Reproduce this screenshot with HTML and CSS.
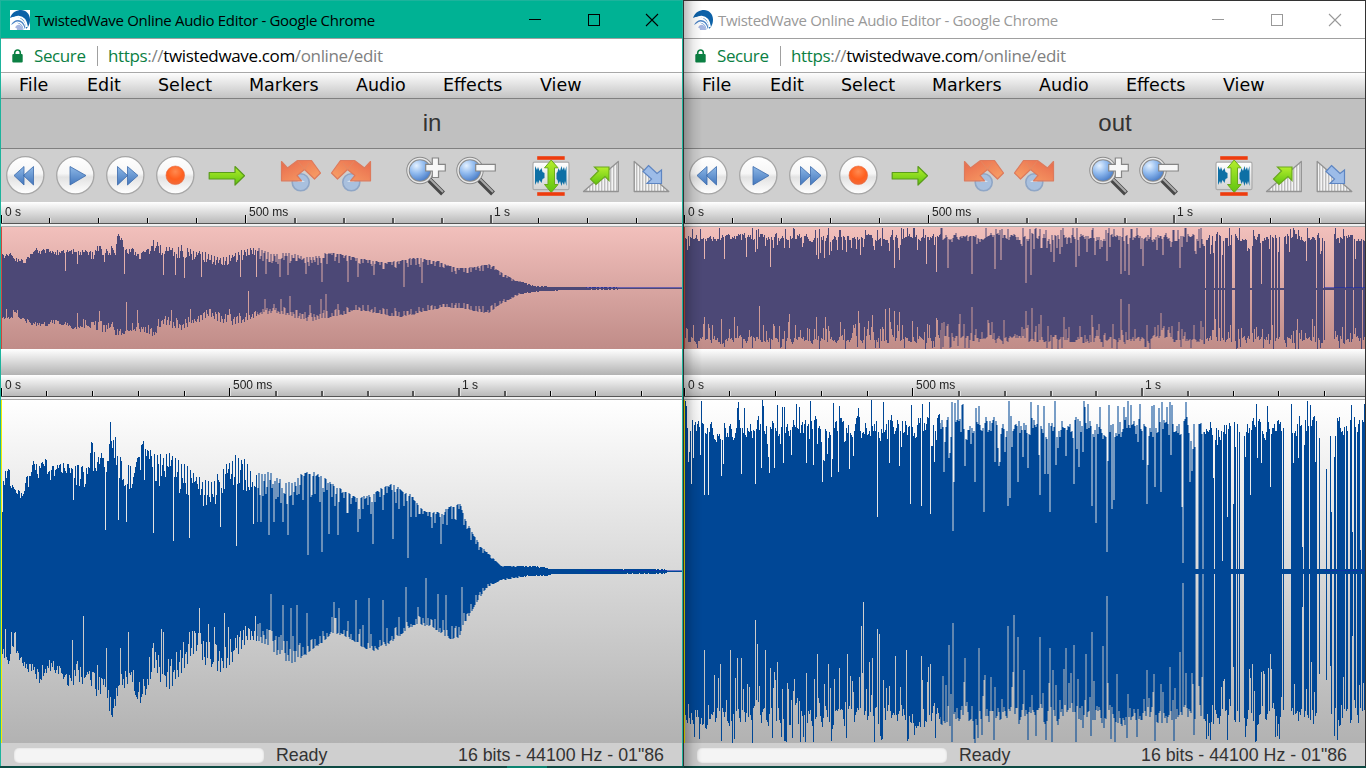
FILE: index.html
```html
<!DOCTYPE html>
<html lang="en">
<head>
<meta charset="utf-8">
<title>TwistedWave Online Audio Editor</title>
<link rel="stylesheet" href="styles.css">
</head>
<body>
<svg class="defs" width="0" height="0" aria-hidden="true">
  <defs>
    <linearGradient id="gBtn" x1="0" y1="0" x2="0" y2="1"><stop offset="0" stop-color="#fff"/><stop offset=".45" stop-color="#f6f6f6"/><stop offset=".55" stop-color="#e2e2e2"/><stop offset="1" stop-color="#fff"/></linearGradient>
    <linearGradient id="gBlue" x1="0" y1="0" x2="0" y2="1"><stop offset="0" stop-color="#8db7e6"/><stop offset="1" stop-color="#4377bd"/></linearGradient>
    <radialGradient id="gRec" cx=".5" cy=".3" r=".7"><stop offset="0" stop-color="#ff8a50"/><stop offset=".6" stop-color="#ff5f1e"/><stop offset="1" stop-color="#f06a3a"/></radialGradient>
    <linearGradient id="gGreen" x1="0" y1="0" x2="0" y2="1"><stop offset="0" stop-color="#b4ee2c"/><stop offset="1" stop-color="#5fc410"/></linearGradient>
    <linearGradient id="gOr" x1="0" y1="0" x2="1" y2="1"><stop offset="0" stop-color="#e8694c"/><stop offset="1" stop-color="#f9a468"/></linearGradient>
    <radialGradient id="gLens" cx=".35" cy=".3" r=".75"><stop offset="0" stop-color="#e4f1ff"/><stop offset=".45" stop-color="#8fb9ee"/><stop offset="1" stop-color="#3c71c0"/></radialGradient>
    <linearGradient id="gPanel" x1="0" y1="0" x2="0" y2="1"><stop offset="0" stop-color="#fff"/><stop offset="1" stop-color="#d2d2d2"/></linearGradient>
    <pattern id="pBars" width="3" height="40" patternUnits="userSpaceOnUse"><rect width="3" height="40" fill="#f4f4f4"/><rect width="1.4" height="40" fill="#bdbdbd"/></pattern>
  </defs>
  <symbol id="logo" viewBox="0 0 20 20">
    <path d="M0 8C2 2 7 0 11 0c5 0 9 4 9 9.500 0 5-2 8-4 9.500 1-8-8-15-16-11z" fill="#0d62a8"/>
    <path d="M1.500 13C2 5 15 3 17 17" fill="none" stroke="#fff" stroke-width="2"/>
    <path d="M1 15C5 7 14 9 15.500 18l-2.500 1.500C12 13 6 11 1 15z" fill="#4f86c6"/>
    <path d="M3.500 14.500C7 9.500 13 13 14 19" fill="none" stroke="#fff" stroke-width="1.200"/>
    <path d="M5 18C7 12 13 15 13 20H7c0-2-1-2.500-2-2z" fill="#a4b5e0"/>
  </symbol>
  <symbol id="lock" viewBox="0 0 11 14"><path d="M2.700 6V3.800a2.800 2.800 0 0 1 5.600 0V6" fill="none" stroke="#0b8043" stroke-width="1.600"/><rect x=".3" y="5" width="10.400" height="8.500" rx="1" fill="#0b8043"/></symbol>
  <symbol id="rew" viewBox="0 0 40 40"><circle cx="20.300" cy="20.300" r="18.600" fill="url(#gBtn)" stroke="#a6a6a6" stroke-width="1.300"/><path d="M9 20.500L19 11.500V30zM18.500 20.500L28.500 11.500V30z" fill="url(#gBlue)" stroke="#3b69ab" stroke-width=".8"/></symbol>
  <symbol id="play" viewBox="0 0 40 40"><circle cx="20.300" cy="20.300" r="18.600" fill="url(#gBtn)" stroke="#a6a6a6" stroke-width="1.300"/><path d="M15 11.500L31 20.500 15 30z" fill="url(#gBlue)" stroke="#3b69ab" stroke-width=".8"/></symbol>
  <symbol id="ff" viewBox="0 0 40 40"><circle cx="20.300" cy="20.300" r="18.600" fill="url(#gBtn)" stroke="#a6a6a6" stroke-width="1.300"/><path d="M12.500 11.500L22.500 20.500 12.500 30zM22.500 11.500L33 20.500 22.500 30z" fill="url(#gBlue)" stroke="#3b69ab" stroke-width=".8"/></symbol>
  <symbol id="rec" viewBox="0 0 40 40"><circle cx="20.300" cy="20.300" r="18.600" fill="url(#gBtn)" stroke="#a6a6a6" stroke-width="1.300"/><circle cx="20.300" cy="20.300" r="9.300" fill="url(#gRec)" stroke="#e86a40" stroke-width=".6"/></symbol>
  <symbol id="arrow" viewBox="0 0 40 40"><path d="M4.200 17.500H30V11.500L39.500 20.700 30 30V24H4.200z" fill="url(#gGreen)" stroke="#5a9c1c" stroke-width="1.200" stroke-linejoin="round"/></symbol>
  <symbol id="undo" viewBox="0 0 42 42"><circle cx="20.700" cy="27.300" r="8.500" fill="#a9c0de" stroke="#8fa6c6" stroke-width="1.600"/><path d="M17 27a4.500 3 0 0 1 8 0" fill="#d6e2f0"/><path d="M17.500 5.500H31.500L40.500 18 34.500 24 24.500 14.500 17 20.500 21.500 25.800H1.500V6.500L7.500 13z" fill="url(#gOr)" stroke="#dd7a5c" stroke-width="1.200" stroke-linejoin="round"/><path d="M17.500 5.500L24.500 14.500 29 8" fill="none" stroke="#e08a65" stroke-width=".8"/></symbol>
  <symbol id="lens" viewBox="0 0 42 42"><path d="M24 24.500L38 38.500" stroke="#484848" stroke-width="5.500"/><path d="M25 24L38 37" stroke="#aaa" stroke-width="2"/><circle cx="15" cy="15.500" r="12" fill="url(#gLens)" stroke="#8b8b8b" stroke-width="3.400"/><circle cx="15" cy="15.500" r="12" fill="none" stroke="#e8e8e8" stroke-width="1.500"/></symbol>
  <symbol id="zin" viewBox="0 0 42 42"><use href="#lens"/><path d="M27.300 3H33.500V9.300H40.300V16H33.500V22.500H27.300V16H20.700V9.300H27.300z" fill="#f7f7f7" stroke="#858585" stroke-width="1.200"/></symbol>
  <symbol id="zout" viewBox="0 0 42 42"><use href="#lens"/><path d="M20.700 9.300H40.300V16H20.700z" fill="#f7f7f7" stroke="#858585" stroke-width="1.200"/></symbol>
  <symbol id="fit" viewBox="0 0 42 42"><rect x="3" y="7.200" width="36" height="27.500" rx="1.500" fill="url(#gPanel)" stroke="#aaa" stroke-width="1.200"/><path d="M5 11l2 4 1-3 1.500 4 2-3 1 4 2 1v5l-2 1-1 4-2-3-1.500 4-1-3-2 4zM26.500 18l1-1 1-4 1.500 3 1.500-5 1 4 1.500-3 1 4 1.500-5v20l-1.500-5-1 4-1.500-3-1 4-1.500-5-1.500 3-1-4-1-1z" fill="#0e70a5"/><path d="M21.200 5L28 12.800H24.500V29.500H28L21.200 37.500 14.500 29.500H18V12.800H14.500z" fill="url(#gGreen)" stroke="#6aa81e" stroke-width="1"/><rect x="7.200" y="1.200" width="27.500" height="3.600" fill="#ee3c0e"/><rect x="7.200" y="37.200" width="27.500" height="3.600" fill="#ee3c0e"/></symbol>
  <symbol id="fadein" viewBox="0 0 42 42"><path d="M3.500 36.500L38.300 6.500V36.500z" fill="url(#pBars)" stroke="#929292" stroke-width="1.300" stroke-linejoin="round"/><path d="M14.500 12H29V25.500L25 21.500 16 29.500 10.500 24 18.500 16z" fill="url(#gGreen)" stroke="#6aa81e" stroke-width="1.200"/></symbol>
  <symbol id="fadeout" viewBox="0 0 42 42"><path d="M4.200 6.500V36.500H38.800z" fill="url(#pBars)" stroke="#929292" stroke-width="1.300" stroke-linejoin="round"/><path d="M18.500 10.500L27 18.500 31.500 15V28.500H17L21.500 24 13 16.500z" fill="#9dbce8" stroke="#5d85c2" stroke-width="1.200"/></symbol>
  <symbol id="min" viewBox="0 0 14 14"><path d="M1 6.500H13" stroke="currentColor"/></symbol>
  <symbol id="max" viewBox="0 0 14 14"><rect x="1.500" y="1.500" width="11" height="11" fill="none" stroke="currentColor"/></symbol>
  <symbol id="close" viewBox="0 0 14 14"><path d="M1 1L13 13M13 1L1 13" fill="none" stroke="currentColor" stroke-width="1.100"/></symbol>
</svg>

<main class="desktop">
  <section class="window active" data-sound="in">
    <header class="titlebar">
      <span class="logo"><svg><use href="#logo"/></svg></span>
      <h1 class="title">TwistedWave Online Audio Editor - Google Chrome</h1>
      <nav class="controls"><svg><use href="#min"/></svg><svg><use href="#max"/></svg><svg><use href="#close"/></svg></nav>
    </header>
    <div class="urlbar">
      <svg class="lock"><use href="#lock"/></svg><span class="secure">Secure</span><i class="divider"></i>
      <span class="url"><span class="scheme">https</span>://<b>twistedwave.com</b>/online/edit</span>
    </div>
    <nav class="menu"><span>File</span><span>Edit</span><span>Select</span><span>Markers</span><span>Audio</span><span>Effects</span><span>View</span></nav>
    <div class="filename">in</div>
    <div class="toolbar">
      <svg><use href="#rew"/></svg><svg><use href="#play"/></svg><svg><use href="#ff"/></svg><svg><use href="#rec"/></svg><svg><use href="#arrow"/></svg>
      <svg class="big group"><use href="#undo"/></svg><svg class="big flip"><use href="#undo"/></svg>
      <svg class="big group"><use href="#zin"/></svg><svg class="big"><use href="#zout"/></svg>
      <svg class="big group"><use href="#fit"/></svg><svg class="big"><use href="#fadein"/></svg><svg class="big"><use href="#fadeout"/></svg>
    </div>
    <div class="ruler ruler-small"><canvas width="681" height="25" data-pitch="48.9"></canvas><span>0 s</span><span>500 ms</span><span>1 s</span></div>
    <canvas class="overview" width="681" height="122"></canvas>
    <div class="scrollbar"></div>
    <div class="ruler ruler-main"><canvas width="681" height="25" data-pitch="45.75"></canvas><span>0 s</span><span>500 ms</span><span>1 s</span></div>
    <canvas class="wave" width="681" height="343"></canvas>
    <footer class="status"><i class="progress"></i><span>Ready</span><span class="format">16 bits - 44100 Hz - 01"86</span></footer>
    <div class="edge"></div>
  </section>

  <section class="window inactive" data-sound="out">
    <header class="titlebar">
      <span class="logo"><svg><use href="#logo"/></svg></span>
      <h1 class="title">TwistedWave Online Audio Editor - Google Chrome</h1>
      <nav class="controls"><svg><use href="#min"/></svg><svg><use href="#max"/></svg><svg><use href="#close"/></svg></nav>
    </header>
    <div class="urlbar">
      <svg class="lock"><use href="#lock"/></svg><span class="secure">Secure</span><i class="divider"></i>
      <span class="url"><span class="scheme">https</span>://<b>twistedwave.com</b>/online/edit</span>
    </div>
    <nav class="menu"><span>File</span><span>Edit</span><span>Select</span><span>Markers</span><span>Audio</span><span>Effects</span><span>View</span></nav>
    <div class="filename">out</div>
    <div class="toolbar">
      <svg><use href="#rew"/></svg><svg><use href="#play"/></svg><svg><use href="#ff"/></svg><svg><use href="#rec"/></svg><svg><use href="#arrow"/></svg>
      <svg class="big group"><use href="#undo"/></svg><svg class="big flip"><use href="#undo"/></svg>
      <svg class="big group"><use href="#zin"/></svg><svg class="big"><use href="#zout"/></svg>
      <svg class="big group"><use href="#fit"/></svg><svg class="big"><use href="#fadein"/></svg><svg class="big"><use href="#fadeout"/></svg>
    </div>
    <div class="ruler ruler-small"><canvas width="681" height="25" data-pitch="48.9"></canvas><span>0 s</span><span>500 ms</span><span>1 s</span></div>
    <canvas class="overview" width="681" height="122"></canvas>
    <div class="scrollbar"></div>
    <div class="ruler ruler-main"><canvas width="681" height="25" data-pitch="45.75"></canvas><span>0 s</span><span>500 ms</span><span>1 s</span></div>
    <canvas class="wave" width="681" height="343"></canvas>
    <footer class="status"><i class="progress"></i><span>Ready</span><span class="format">16 bits - 44100 Hz - 01"86</span></footer>
    <div class="edge"></div>
  </section>
</main>
<script src="waves.js"></script>
</body>
</html>
```

FILE: styles.css
```css
* { box-sizing: border-box; }
body { margin: 0; overflow: hidden; font-family: "Liberation Sans", Arial, sans-serif; }
.defs { position: absolute; }
.desktop { display: flex; width: 1366px; height: 768px; }
svg, canvas { display: block; }

.window { position: relative; display: flex; flex-direction: column; width: 683px; height: 768px; border: 1px solid #1db39c; border-bottom: 0; background: #cfcfcf; }
.inactive { border-color: #333; }
.inactive::after { content: ""; position: absolute; left: 0; top: 0; bottom: 0; width: 18px; background: linear-gradient(90deg, rgba(0,0,0,.26), rgba(0,0,0,.08) 50%, transparent); }

.titlebar { display: flex; align-items: center; height: 38px; padding: 0 23px 0 9px; background: #00b294; border-bottom: 1px solid #a0a0a0; color: #000; }
.inactive .titlebar { background: #fff; color: #999; }
.logo { width: 20px; height: 20px; background: #fff; }
.logo svg { width: 20px; height: 20px; }
.title { margin: 0 0 0 5px; font: 400 15px "Open Sans", "Noto Sans", sans-serif; letter-spacing: -.3px; white-space: nowrap; }
.controls { display: flex; gap: 44.500px; margin-left: auto; }
.controls svg { width: 14px; height: 14px; }

.urlbar { display: flex; align-items: center; height: 34px; padding-left: 11px; background: #fff; border-bottom: 1px solid #a8a8a8; font: 17px "Open Sans", "Noto Sans", sans-serif; white-space: nowrap; color: #808080; }
.lock { width: 11px; height: 14px; margin-top: 1px; }
.secure { width: 63px; margin-left: 11px; color: #0b8043; letter-spacing: -.4px; }
.divider { width: 1px; height: 20px; background: #a0a0a0; margin-right: 10px; }
.url { letter-spacing: -.35px; }
.url b { font-weight: 400; color: #000; }
.scheme { color: #0b8043; }

.menu { display: grid; grid-template-columns: 68px 71px 91px 107px 87px 97px auto; height: 26px; padding-left: 18px; border-bottom: 1px solid #808080; background: linear-gradient(#fdfdfd, #c3c3c3); font: 17.500px/24px "DejaVu Sans", sans-serif; color: #000; }
.filename { height: 50px; padding-left: 181px; border-bottom: 1px solid #808080; background: #c0c0c0; text-align: center; font-size: 24px; line-height: 48px; color: #333; }

.toolbar { display: flex; gap: 10px; height: 53px; padding: 6px 0 0 4px; background: #cfcfcf; }
.toolbar svg { width: 40px; height: 40px; flex: none; }
.toolbar .big { width: 42px; height: 42px; margin-right: -2px; }
.toolbar .group { margin-left: 25px; }
.flip { transform: scaleX(-1); }

.ruler { position: relative; display: grid; height: 25px; padding: 3px 0 0 4px; font-size: 12px; line-height: 15px; color: #222; background: linear-gradient(#fff, #b9b9b9 21px); }
.ruler canvas { position: absolute; left: 0; top: 0; }
.ruler span { position: relative; }
.ruler-small { grid-template-columns: 244px 245px 1fr; }
.ruler-main { grid-template-columns: 228px 229px 1fr; }
.overview { height: 122px; background: linear-gradient(#f2c0bc, #c08c88); }
.scrollbar { height: 26px; background: linear-gradient(#fff, #b2b2b2); }
.wave { height: 343px; background: linear-gradient(#fff, #b2b2b2); }

.status { display: flex; align-items: center; height: 23px; padding: 0 18px 0 13px; background: #cfcfcf; font-size: 17.800px; color: #333; }
.progress { width: 250px; height: 15px; margin: 2px 12px 0 0; border-radius: 5px; background: #f4f4f4; box-shadow: inset 0 0 2px #ccc; }
.status span { margin-top: 1px; }
.format { margin-left: auto; }
.edge { height: 2px; margin: 0 -1px; background: #0d4a43; }
.active .edge { background: linear-gradient(90deg, #0d4a43 507px, #0b8471 507px 547px, #0d4a43 547px); }
```

FILE: waves.js
```js
const SOFT_START = 256, SOFT_END = 520;

function random(seed) {
  let s = seed;
  return () => {
    s = (s * 1664525 + 1013904223) % 4294967296;
    return s / 4294967296;
  };
}

function envelope(points, x) {
  for (let i = 2; i < points.length; i += 2) {
    if (x <= points[i]) {
      const t = (x - points[i - 2]) / (points[i] - points[i - 2]);
      return points[i - 1] + t * (points[i + 1] - points[i - 1]);
    }
  }
  return points[points.length - 1];
}

const IN_TOP = [0,96,3,98,5,104,8,102,12,88,18,84,22,78,24,98,28,96,33,115,36,104,40,112,44,115,48,104,52,108,60,108,67,112,72,106,78,112,82,104,86,108,87,126,88,112,90,138,92,126,95,118,100,120,104,128,106,114,108,145,110,156,112,148,115,128,120,115,125,112,130,108,135,112,138,116,140,128,142,144,143,122,146,134,150,118,155,118,163,118,168,122,173,118,180,108,190,106,195,98,200,92,210,90,218,100,225,110,231,115,236,118,242,115,250,102,256,98,265,101,275,98,285,89,292,90,300,98,310,101,320,96,330,90,341,82,350,77,360,74,370,78,383,86,393,88,403,80,410,77,417,68,425,60,435,60,442,60,450,67,460,68,463,56,470,42,475,34,480,25,490,16,500,6,540,5,548,3,640,2.5,664,2,666,1,681,1];
const IN_BOTTOM = [0,80,5,95,10,88,13,70,15,84,20,92,25,100,32,106,38,112,45,102,52,100,62,108,69,119,75,108,80,112,90,118,95,125,105,120,108,145,112,152,114,138,120,118,125,125,135,127,140,133,143,141,146,118,152,98,160,112,167,119,172,115,178,105,185,95,190,84,195,80,200,90,208,98,217,103,225,98,235,85,245,72,256,71,265,73,275,83,285,90,293,92,300,87,310,80,320,74,330,62,341,64,355,72,365,78,373,81,385,75,395,67,405,60,415,53,430,55,440,62,450,68,458,68,463,52,470,42,475,32,485,17,500,9,512,7,525,5,548,4,551,3,640,2.5,664,2,666,1,681,1];

const DIPS = {
  inWave: {
    top: [1,60,72,72,104,42,117,52,125,50,152,39,172,31,188,34,219,45,235,26,252,48,256,50,260,50,268,37,273,50,282,50,287,37,307,17,321,20,328,38,337,37,357,40,372,28,392,33,407,14,440,28],
    bottom: [4,57,10,60,14,60,71,68,82,44,105,76,119,76,127,60,160,57,162,60,188,60,198,36,207,52,213,55,223,41,227,55,234,66,254,44,257,52,270,22,282,33,290,36,296,33,306,41,333,30,338,36,355,28,368,26,382,28,405,15,417,35,425,6,437,22,445,23,461,15]
  },
  inOverview: {
    top: [64,18,76,25,103,27,123,15,162,14,174,14,183,11,200,12,239,12,255,12,265,15,279,12,287,14,305,15,321,7,347,7,357,12,373,14,403,2,421,6],
    bottom: [5,20,12,21,16,21,76,24,98,22,125,13,136,21,170,21,189,20,228,20,247,2,264,10,273,15,280,10,289,7,309,16,320,10,325,5,337,15]
  },
  outWave: {
    top: [7,88,20,77,24,77,37,96,57,98,71,88,138,90,193,55,226,68,237,66,246,58,269,41,270,90,291,90,300,60,324,66,326,74,334,90,344,104,356,77,366,60,390,88,408,66,412,49,423,20,428,63,430,72,463,68,471,85,477,80,498,65,499,9,538,11,543,55,549,68,566,77,586,85,618,25,638,41,647,60,668,40,676,22],
    bottom: [20,78,36,92,46,78,53,86,57,86,71,48,73,72,81,78,93,90,133,82,144,92,163,82,177,54,179,30,185,90,188,86,193,57,195,62,211,84,222,78,237,84,246,92,265,73,269,51,281,86,295,76,324,54,330,43,334,65,356,65,366,76,369,98,382,76,390,73,402,82,408,60,419,74,423,24,433,102,463,98,470,102,486,95,496,80,499,11,549,95,566,106,577,100,586,82,618,35,627,90,638,18,652,80,668,64]
  },
  outOverview: {
    top: [20,30,40,30,62,32,86,22,134,30,140,31,176,34,210,21,215,29,242,25,252,17,264,21,288,15,311,20,317,29,342,6,347,14,370,27,392,22,423,28,437,15,441,18,445,14,459,23,496,21,540,28,577,5,590,24,622,28,671,30],
    bottom: [20,28,37,30,50,28,75,17,105,25,132,28,141,28,174,22,188,26,201,20,205,19,210,22,215,23,252,29,276,25,288,18,320,31,342,22,348,19,357,26,380,28,408,26,437,10,445,15,477,24,531,30,540,33,628,30]
  }
};

const GAPS = {
  outWave: [[512,3],[519,1],[530,1],[547,2],[552,1],[554,1],[556,4],[598,1],[600,7],[619,1],[625,1],[633,2],[636,6],[643,3],[648,2],[652,1],[661,1],[664,2],[669,1],[672,1],[677,1]],
  outOverview: [[521,1],[530,1],[534,1],[537,1],[540,1],[548,3],[566,2],[587,1],[590,1],[593,1],[596,4],[632,1],[639,1],[641,9],[661,1],[669,1],[678,1]]
};

function inSamples(points, seed, scaleX, scaleY) {
  const r = random(seed);
  const out = [];
  for (let k = 0; k <= 682; k++) {
    const x = k / scaleX;
    const top = envelope(points, x);
    const depth = x < 75 ? 0.13 : x < 150 ? 0.25 : x < 480 ? 0.3 : 0.25;
    const beat = x < 150 ? r() : (k % 3 === 0 || (x > 300 && k % 4 < 2) ? r() * 0.25 : 0.35 + r() * 0.65);
    out.push(Math.max(0.6, top * scaleY * (1 - depth * Math.pow(beat, 1.4))));
  }
  return out;
}

function outSamples(seed, full, bottom) {
  const r = random(seed);
  const out = [];
  let level = 0.5;
  for (let k = 0; k <= 682; k++) {
    level = level * 0.5 + r() * 0.5;
    let h = 0.94 - level * 0.21;
    const u = r();
    if (u < 0.1) h = 0.95 + r() * 0.05;
    else if (u > (bottom ? 0.78 : 0.87)) h -= 0.07 + r() * 0.2;
    out.push(h * full);
  }
  return out;
}

function applyDips(samples, dips) {
  for (let i = 0; i < dips.length; i += 2) samples[dips[i]] = Math.min(samples[dips[i]], dips[i + 1]);
}

function applyGaps(top, bottom, gaps, h) {
  gaps.forEach(([start, n]) => {
    for (let k = start; k < start + n; k++) { top[k] = h; bottom[k] = h; }
  });
}

function drawWave(canvas, top, bottom, mid, solid, soft, cursor, cursorWidth, lineFrom) {
  const c = canvas.getContext('2d');
  for (let x = 0; x < 681; x++) {
    const blended = x >= SOFT_START && x < SOFT_END;
    const a = blended ? Math.max(top[x], top[x + 1]) : top[x];
    const b = blended ? Math.max(bottom[x], bottom[x + 1]) : bottom[x];
    const a0 = blended ? Math.min(top[x], top[x + 1]) : a;
    const b0 = blended ? Math.min(bottom[x], bottom[x + 1]) : b;
    const y1 = Math.round(mid - a), y2 = Math.round(mid - a0);
    const y3 = Math.round(mid + b0), y4 = Math.round(mid + b);
    c.fillStyle = soft;
    c.fillRect(x, y1, 1, y2 - y1);
    c.fillRect(x, y3, 1, y4 - y3);
    c.fillStyle = solid;
    c.fillRect(x, y2, 1, Math.max(1, y3 - y2));
  }
  c.fillStyle = '#1426b4';
  c.globalAlpha = 0.55;
  c.fillRect(lineFrom, Math.floor(mid) - 1, 681 - lineFrom, 1);
  c.globalAlpha = 1;
  c.fillStyle = cursor;
  c.fillRect(0, 0, cursorWidth, canvas.height);
}

function drawRuler(canvas) {
  const c = canvas.getContext('2d');
  const pitch = Number(canvas.dataset.pitch);
  c.fillStyle = '#f0f0f0';
  c.fillRect(0, 22, 681, 3);
  c.fillStyle = '#555';
  c.fillRect(0, 21, 681, 1);
  c.fillStyle = '#aaa';
  c.fillRect(0, 24, 681, 1);
  for (let i = 0; i * pitch < 681; i++) {
    const x = Math.floor(i * pitch);
    const h = i % 5 ? 5 : 8;
    const blended = x >= SOFT_START && x < SOFT_END;
    c.fillStyle = '#e6e6e6';
    c.fillRect(x + 1, 21 - h, blended ? 2 : 1, h);
    c.fillStyle = blended ? '#555' : '#000';
    c.fillRect(x, 21 - h, blended ? 2 : 1, h);
  }
}

document.querySelectorAll('.ruler canvas').forEach(drawRuler);

document.querySelectorAll('.window').forEach((win) => {
  const isIn = win.dataset.sound === 'in';
  [['.wave', 'Wave', 172, 171.5], ['.overview', 'Overview', 61, 61.5]].forEach(([sel, name, full, mid], i) => {
    const key = win.dataset.sound + name;
    const sx = i ? 1.069 : 1;
    const sy = i ? 0.355 : 1;
    const top = isIn ? inSamples(IN_TOP, 7 + i, sx, sy) : outSamples(31 + i, full, false);
    const bottom = isIn ? inSamples(IN_BOTTOM, 19 + i, sx, sy) : outSamples(53 + i, full, true);
    applyDips(top, DIPS[key].top);
    applyDips(bottom, DIPS[key].bottom);
    if (!isIn) applyGaps(top, bottom, GAPS[key], i ? 1 : 2.5);
    drawWave(win.querySelector(sel), top, bottom, mid,
      i ? '#4c4876' : '#004796',
      i ? 'rgba(76,72,118,.5)' : 'rgba(0,71,150,.52)',
      i ? '#d0483c' : '#f2ee00', 1, isIn ? 585 : 640);
  });
});
```
